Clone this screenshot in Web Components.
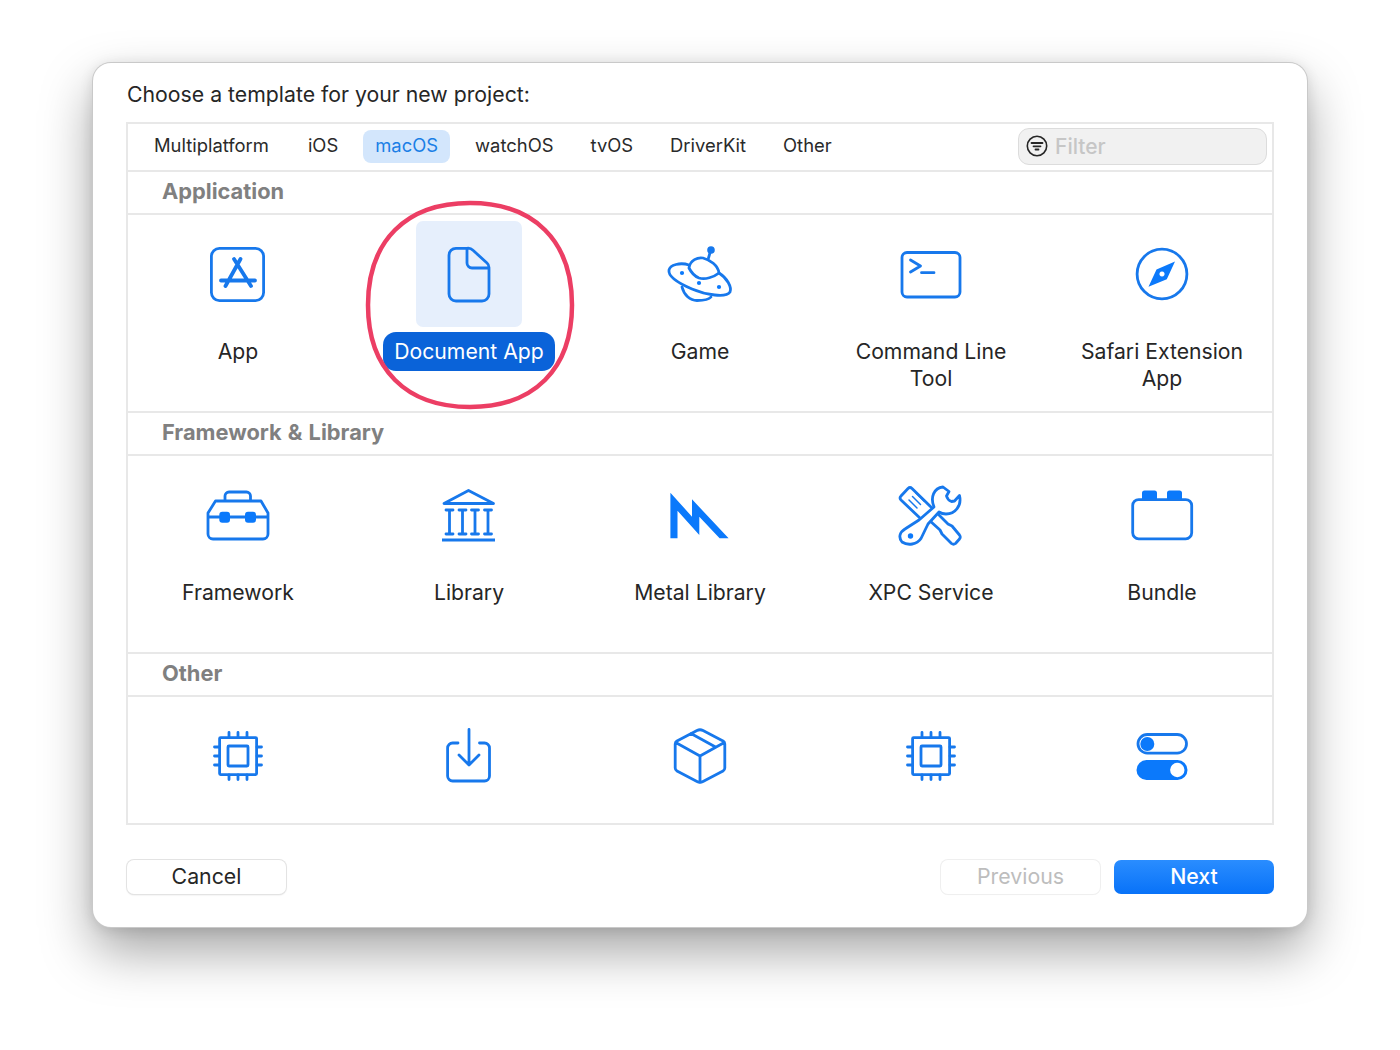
<!DOCTYPE html>
<html lang="en"><head><meta charset="utf-8"><title>Choose a template</title>
<style>
html,body{margin:0;background:#fff}
body{padding:63px 93px 0;height:1050px;box-sizing:border-box;overflow:hidden;font-family:Inter,"Liberation Sans",sans-serif;color:#262626}
</style></head><body>
<x-dialog>
  <span slot="title">Choose a template for your new project:</span>
  <x-tabbar slot="tabs">
    <x-tab>Multiplatform</x-tab><x-tab>iOS</x-tab><x-tab active>macOS</x-tab><x-tab>watchOS</x-tab><x-tab>tvOS</x-tab><x-tab>DriverKit</x-tab><x-tab>Other</x-tab>
    <x-filter slot="end" placeholder="Filter"></x-filter>
  </x-tabbar>
  <x-section slot="sections" heading="Application">
    <x-template icon="app">App</x-template>
    <x-template icon="doc" selected circled>Document App</x-template>
    <x-template icon="game">Game</x-template>
    <x-template icon="term">Command Line Tool</x-template>
    <x-template icon="safari">Safari Extension App</x-template>
  </x-section>
  <x-section slot="sections" heading="Framework &amp; Library">
    <x-template icon="framework">Framework</x-template>
    <x-template icon="library">Library</x-template>
    <x-template icon="metal">Metal Library</x-template>
    <x-template icon="xpc">XPC Service</x-template>
    <x-template icon="bundle">Bundle</x-template>
  </x-section>
  <x-section slot="sections" heading="Other" last>
    <x-template icon="chip"></x-template>
    <x-template icon="install"></x-template>
    <x-template icon="box"></x-template>
    <x-template icon="chip"></x-template>
    <x-template icon="toggles"></x-template>
  </x-section>
  <x-button slot="left">Cancel</x-button>
  <x-button slot="right" disabled>Previous</x-button>
  <x-button slot="right" primary>Next</x-button>
</x-dialog>
<script>
const pins=(()=>{let d='';for(const p of[-9,0,9]){d+=`M${p} -23.500V-19M${p} 19V23.500M-23.500 ${p}H-19M19 ${p}H23.500`;}return d;})();
const ICONS={
app:`<rect x="-26.600" y="-25.600" width="52.200" height="52.200" rx="8"/><g stroke-width="3.800"><path d="M2.500 -15L-12.500 12M-4 -15L13 12M-17 6.500H17"/></g>`,
doc:`<path d="M-2 -25.700H-13a7 7 0 0 0-7 7V20a7 7 0 0 0 7 7H13a7 7 0 0 0 7-7V-6.500a6 6 0 0 0-2-4.500L4 -23.700a7 7 0 0 0-6-2zM-2 -25.700V-11a5 5 0 0 0 5 5H20"/>`,
game:`<path d="M-11 -9C-20 -12 -30 -9 -31 -4C-32 2 -22 9 -8 15C6 21 26 24 30 18C32 13 27 4 19 -1"/><path d="M-11 -6C-10 -14 -2 -17 3 -16C10 -14 18 -9 19 -1C14 3 5 6 -1 4C-6 2 -9 -2 -11 -6z"/><path d="M8.500 -16L10.500 -23"/><circle cx="11" cy="-24" r="2.400" class="f"/><path d="M-18 13C-16 21 -10 26.500 -3 26.500C3 26.500 9 25.500 11 23"/><circle cx="-18" cy="-1" r="2.100" class="f" stroke="none"/><circle cx="-1" cy="9" r="2.100" class="f" stroke="none"/><circle cx="19" cy="13" r="2.100" class="f" stroke="none"/>`,
term:`<rect x="-29" y="-21.500" width="58" height="44.500" rx="5"/><path d="M-20.500 -14L-10.500 -8L-20.500 -2M-9.500 -1.300H3"/>`,
safari:`<circle cx="0" cy="0" r="24.900"/><path class="f" style="fill-rule:evenodd" stroke="none" d="M13 -12.500L4.800 5.200L-13.500 12.800L-5.500 -4.600zM0 -2.600a2.600 2.600 0 1 0 .01 0z"/>`,
framework:`<path d="M-22.500 -14H23L30 -2V19a5 5 0 0 1-5 5H-25a5 5 0 0 1-5-5V-2zM-13 -14V-19a4 4 0 0 1 4-4H8.500a4 4 0 0 1 4 4V-14M-30 2H30"/><rect class="f" stroke="none" x="-18.700" y="-3.300" width="10.700" height="11" rx="3"/><rect class="f" stroke="none" x="7" y="-3.300" width="11" height="11" rx="3"/>`,
library:`<path d="M-25 -11.500L-.5 -24.500L24.500 -11.500z"/><path stroke-width="2.800" d="M-19.500 -5V19M-6.500 -5V19M6 -5V19M19 -5V19M-23 -5H-16M-10 -5H-3M2.500 -5H9.500M15.500 -5H22.500M-23 19H-16M-10 19H-3M2.500 19H9.500M15.500 19H22.500"/><path stroke-width="3.200" stroke-linecap="butt" d="M-27 25H26"/>`,
metal:`<path class="f" stroke="none" d="M-29.600 23.300V-22.300L-8 1.700V-15.700L28.600 23.300H19.600L-.7 1.700V20L-22.500 -4.300V23.300z"/>`,
xpc:`<path d="M-23 -26.500Q-21 -28.500 -19 -26.500L1 -7L5 -3L17 9L21 11L28.500 20Q30 22 28.500 24L24.500 28.500Q22.500 30 20.500 28.500L11 19L9 15L-2 5L-10 4L-30 -15Q-32 -17 -30 -19z" style="fill:#fff"/><path stroke-width="1.500" d="M-22 -15L-14 -7M-18.500 -18.500L-10.500 -10.500M-15 -22L-7 -14"/><path style="fill:#fff" d="M12 -28L18 -23.500L15.500 -19Q16.500 -15 20.500 -13.500L23.500 -14L28.500 -19.500C31 -9 24 -1 15 -1Q11 -1 8 -3L-3 9L-10 23.500C-14 29.500 -23 31 -29 27C-33 22 -31 17 -26 14L-12 5L3 -8C-1 -18 3 -27 12 -28z"/><circle class="f" stroke="none" cx="-20.500" cy="21" r="2.700"/>`,
bundle:`<rect x="-29.300" y="-15.400" width="59" height="39.200" rx="6"/><path class="f" stroke="none" d="M-20 -16V-22a2.500 2.500 0 0 1 2.500-2.500H-7.500A2.500 2.500 0 0 1-5 -22V-16zM5 -16V-22a2.500 2.500 0 0 1 2.500-2.500H17.500A2.500 2.500 0 0 1 20 -22V-16z"/>`,
chip:`<rect x="-18.400" y="-18.400" width="37" height="37" rx="1"/><rect x="-10" y="-10" width="20" height="20" rx="1"/><path d="${pins}"/>`,
install:`<path d="M-11 -13H-16.400a5 5 0 0 0-5 5V20a5 5 0 0 0 5 5H15.500a5 5 0 0 0 5-5V-8a5 5 0 0 0-5-5H10.500M0 -26.500V8.500M-10 -1L0 9L10 -1"/>`,
box:`<path d="M-3 -25.500Q0 -27 3 -25.500L23 -15Q24.800 -13.800 24.800 -12V12Q24.800 13.800 23 15L3 25.500Q0 27 -3 25.500L-23 15Q-24.800 13.800 -24.800 12V-12Q-24.800 -13.800 -23 -15zM-24.300 -13.500L0 0L24.300 -13.500M0 0V26.500M-9 -22.500L15.500 -9"/>`,
toggles:`<rect x="-24" y="-21.500" width="48.500" height="18.600" rx="9.300"/><circle class="f" stroke="none" cx="-14.700" cy="-12" r="7"/><rect class="f" stroke="none" x="-25.500" y="4" width="51" height="20" rx="10"/><circle cx="15.300" cy="14" r="7.200" stroke="none" style="fill:#fff"/>`
};
class Base extends HTMLElement{
  constructor(){super();this.attachShadow({mode:'open'});}
  connectedCallback(){this.shadowRoot.innerHTML=this.html();}
}
customElements.define('x-icon',class extends Base{html(){const n=this.getAttribute('name');return `<style>
:host{display:block;width:80px;height:80px}
svg{display:block;overflow:visible}
svg{fill:none;stroke:#1778ec;stroke-width:2.800;stroke-linecap:round;stroke-linejoin:round}
.f{fill:#0b79fb}
</style><svg width="80" height="80" viewBox="-40 -40 80 80">${ICONS[n]}</svg>`;}});
customElements.define('x-dialog',class extends Base{html(){return `<style>
:host{display:block;box-sizing:border-box;width:1214px;height:864px;background:#fff;border-radius:18px;padding:0 33px;
 box-shadow:0 0 0 1px #c9c9c9,0 24px 52px rgba(0,0,0,.36),0 2px 14px rgba(0,0,0,.12)}
.title{height:59px;display:flex;align-items:center;padding:2px 0 0 1px;box-sizing:border-box;font-size:21.250px;line-height:26px}
.panel{box-sizing:border-box;height:703px;border:2px solid #e8e8e8;overflow:hidden}
.foot{display:flex;justify-content:space-between;margin:35px 0 0 1px}
.right{display:flex;gap:14px}
</style><div class="title"><slot name="title"></slot></div>
<div class="panel"><slot name="tabs"></slot><slot name="sections"></slot></div>
<div class="foot"><slot name="left"></slot><div class="right"><slot name="right"></slot></div></div>`;}});
customElements.define('x-tabbar',class extends Base{html(){return `<style>
:host{display:flex;box-sizing:border-box;height:46px;align-items:center;padding:0 5px 2px 14px;gap:13px}
::slotted(x-tab:first-child){margin-right:2px}
.end{margin-left:auto}
</style><slot></slot><div class="end"><slot name="end"></slot></div>`;}});
customElements.define('x-tab',class extends Base{html(){return `<style>
:host{display:block;box-sizing:border-box;height:33px;line-height:30px;padding:0 12px;border-radius:8px;font-size:18.400px;color:#2a2a2a}
:host([active]){background:#d3e6fc;color:#1b7fe6}
</style><slot></slot>`;}});
customElements.define('x-filter',class extends Base{html(){return `<style>
:host{display:flex;align-items:center;box-sizing:border-box;width:249px;height:37px;background:#f1f1f1;border:1.500px solid #dcdcdc;border-radius:11px;padding-left:7px;gap:7px}
svg{flex:none;display:block}
span{font-size:21px;font-weight:500;color:#c6c6c6}
</style><svg width="22" height="22" viewBox="0 0 22 22" fill="none" stroke="#262626" stroke-linecap="round"><circle cx="11" cy="11" r="9.700" stroke-width="1.600"/><path d="M5.500 8H16.500" stroke-width="1.800"/><path d="M7.500 11.300H14.500" stroke-width="1.800"/><path d="M9.500 14.500H12.500" stroke-width="1.800"/></svg><span>${this.getAttribute('placeholder')}</span>`;}});
customElements.define('x-section',class extends Base{html(){return `<style>
:host{display:block}
h2{margin:0;box-sizing:border-box;height:45px;padding:0 0 0 34px;border-top:2px solid #e8e8e8;border-bottom:2px solid #e8e8e8;font-size:21.800px;word-spacing:1px;line-height:38px;font-weight:700;color:#808080}
.grid{display:grid;grid-template-columns:repeat(5,231px);justify-content:center;height:196px}
</style><h2>${this.getAttribute('heading').replace('&','&amp;')}</h2><div class="grid"><slot></slot></div>`;}});
customElements.define('x-template',class extends Base{html(){
  return `<style>
:host{display:flex;flex-direction:column;align-items:center;position:relative;padding-top:6px;text-align:center;font-size:21.200px;line-height:27px}
.tile{width:106px;height:106px;border-radius:7px;display:flex;align-items:center;justify-content:center}
:host([selected]) .tile{background:#e6effc}
.label{margin-top:5px;padding:6px 11px;max-width:176px;border-radius:13px;color:#262626}
:host([selected]) .label{background:#0a63d9;color:#fff}
.ring{position:absolute;left:11px;top:-15px;pointer-events:none;overflow:visible}
</style><div class="tile"><x-icon name="${this.getAttribute('icon')}"></x-icon></div>
${this.textContent.trim()?'<div class="label"><slot></slot></div>':''}
${this.hasAttribute('circled')?'<svg class="ring" width="210" height="210" viewBox="-105 -105 210 210" fill="none" stroke="#ec3e64" stroke-width="4.500"><path d="M0 -102C64 -102 102 -64 102 0C102 64 64 102 0 102C-64 102 -102 64 -102 0C-102 -64 -64 -102 0 -102z"/></svg>':''}`;}});
customElements.define('x-button',class extends Base{html(){return `<style>
:host{display:block;box-sizing:border-box;width:159px;height:34px;line-height:33px;text-align:center;font-size:21.300px;border-radius:7px;background:#fff;color:#262626;box-shadow:0 0 0 1px #e3e3e3,0 1px 2px rgba(0,0,0,.14)}
:host([disabled]){color:#bdbdbd;box-shadow:0 0 0 1px #efefef,0 1px 1px rgba(0,0,0,.04)}
:host([primary]){width:160px;color:#fff;font-weight:500;background:linear-gradient(#2a8dff,#0872f8);box-shadow:none}
</style><slot></slot>`;}});
</script>
</body></html>
